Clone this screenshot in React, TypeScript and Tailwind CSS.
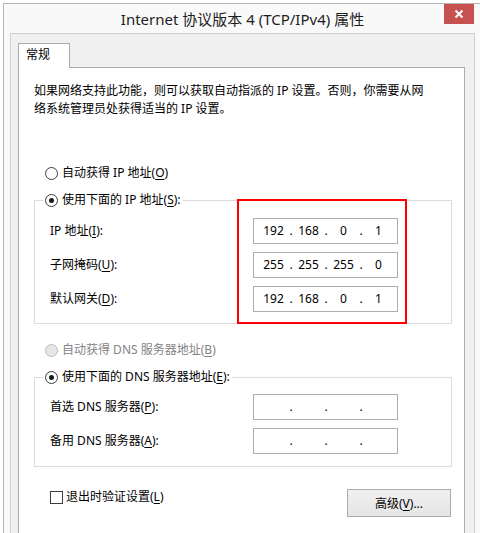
import React from "react";

const FONT = '"Noto Sans", "Noto Sans CJK SC", sans-serif';

function M({ children }: { children: React.ReactNode }) {
  return <span className="underline underline-offset-[2px]">{children}</span>;
}

function Radio({ checked, disabled }: { checked?: boolean; disabled?: boolean }) {
  return (
    <span
      className={
        disabled
          ? "w-[13px] h-[13px] rounded-full border border-[#bcbcbc] bg-[#e6e6e6] flex items-center justify-center shrink-0"
          : "w-[13px] h-[13px] rounded-full border border-[#3c3c3c] bg-white flex items-center justify-center shrink-0"
      }
    >
      {checked && <span className="w-[5px] h-[5px] rounded-full bg-[#1a1a1a]" />}
    </span>
  );
}

function IpBox({ parts }: { parts: string[] }) {
  return (
    <div className="w-[145px] h-[26px] border border-[#abadb3] bg-white flex items-center pl-[3px] text-[12px] leading-[18px] text-black">
      {parts.map((p, i) => (
        <React.Fragment key={i}>
          <div className="w-[33px] text-center">{p}</div>
          {i < 3 && <div className="w-[2px] flex justify-center">.</div>}
        </React.Fragment>
      ))}
    </div>
  );
}

function Row({ label, parts }: { label: React.ReactNode; parts: string[] }) {
  return (
    <div className="flex items-center">
      <div className="w-[218px] pl-[15px] leading-[18px]">{label}</div>
      <IpBox parts={parts} />
    </div>
  );
}

export default function App() {
  return (
    <div
      className="w-[480px] h-[533px] overflow-hidden bg-white pl-[3px] pt-[3px] text-[12px] text-black"
      style={{ fontFamily: FONT }}
    >
      <div className="w-[478px] h-[600px] border-l border-t border-[#b4b4b4] bg-[#f9f9f9]">
        {/* Title bar */}
        <div className="relative h-[29px] flex items-center justify-center">
          <span className="text-[15px] leading-[20px] text-[#1e1e1e]">
            Internet 协议版本 4 (TCP/IPv4) 属性
          </span>
          <div className="absolute top-0 right-[7px] w-[30px] h-[20px] bg-[#c75050] flex items-center justify-center">
            <svg width="10" height="10" viewBox="0 0 10 10">
              <path d="M1.5 1.5 L8.5 8.5 M8.5 1.5 L1.5 8.5" stroke="#fff" strokeWidth="2" />
            </svg>
          </div>
        </div>

        {/* Client area */}
        <div className="ml-[6px] w-[465px] h-[560px] border-l border-t border-r border-[#d0d0d0] bg-[#f0f0f0] pt-[9px]">
          {/* Tab header */}
          <div className="ml-[7px] w-[52px] h-[25px] border-t border-l border-r border-[#acacac] bg-white relative z-10 -mb-[1px] pl-[7px] pt-[2px] leading-[18px]">
            常规
          </div>
          {/* Tab page */}
          <div className="ml-[7px] w-[447px] h-[520px] border border-[#acacac] bg-white">
            <div className="pl-[15px] pt-[14px] leading-[18px]">
              如果网络支持此功能，则可以获取自动指派的 IP 设置。否则，你需要从网
              <br />
              络系统管理员处获得适当的 IP 设置。
            </div>

            <div className="mt-[46px] pl-[26px] h-[18px] flex items-center gap-[4px] leading-[18px]">
              <Radio />
              <span>
                自动获得 IP 地址(<M>O</M>)
              </span>
            </div>

            <div className="relative mt-[9px] ml-[15px] w-[418px]">
              <fieldset className="border border-[#dcdcdc] pb-[11px]">
                <legend className="ml-[9px] pl-[1px] pr-[2px]">
                  <span className="h-[18px] flex items-center gap-[4px] leading-[18px]">
                    <Radio checked />
                    <span>
                      使用下面的 IP 地址(<M>S</M>):
                    </span>
                  </span>
                </legend>
                <div className="mt-[9px] flex flex-col gap-[8px]">
                  <Row
                    label={
                      <>
                        IP 地址(<M>I</M>):
                      </>
                    }
                    parts={["192", "168", "0", "1"]}
                  />
                  <Row
                    label={
                      <>
                        子网掩码(<M>U</M>):
                      </>
                    }
                    parts={["255", "255", "255", "0"]}
                  />
                  <Row
                    label={
                      <>
                        默认网关(<M>D</M>):
                      </>
                    }
                    parts={["192", "168", "0", "1"]}
                  />
                </div>
              </fieldset>
              <div className="absolute left-[203px] top-[8px] w-[170px] h-[125px] border-2 border-[#ff0000] pointer-events-none" />
            </div>

            <div className="mt-[17px] pl-[26px] h-[18px] flex items-center gap-[4px] leading-[18px] text-[#838383]">
              <Radio disabled />
              <span>
                自动获得 DNS 服务器地址(<M>B</M>)
              </span>
            </div>

            <div className="mt-[9px] ml-[15px] w-[418px]">
              <fieldset className="border border-[#dcdcdc] pb-[12px]">
                <legend className="ml-[9px] pl-[1px] pr-[2px]">
                  <span className="h-[18px] flex items-center gap-[4px] leading-[18px]">
                    <Radio checked />
                    <span>
                      使用下面的 DNS 服务器地址(<M>E</M>):
                    </span>
                  </span>
                </legend>
                <div className="mt-[8px] flex flex-col gap-[8px]">
                  <Row
                    label={
                      <>
                        首选 DNS 服务器(<M>P</M>):
                      </>
                    }
                    parts={["", "", "", ""]}
                  />
                  <Row
                    label={
                      <>
                        备用 DNS 服务器(<M>A</M>):
                      </>
                    }
                    parts={["", "", "", ""]}
                  />
                </div>
              </fieldset>
            </div>

            <div className="mt-[21px] ml-[15px] w-[418px] flex justify-between items-start">
              <div className="pl-[16px] h-[18px] flex items-center gap-[3px] leading-[18px]">
                <span className="w-[13px] h-[13px] border border-[#3c3c3c] bg-white shrink-0" />
                <span>
                  退出时验证设置(<M>L</M>)
                </span>
              </div>
              <div className="mt-[1px] mr-[1px] w-[104px] h-[28px] border border-[#acacac] bg-gradient-to-b from-[#f0f0f0] to-[#e5e5e5] flex items-center justify-center leading-[18px] pt-[1px]">
                <span>
                  高级(<M>V</M>)...
                </span>
              </div>
            </div>
          </div>
        </div>
      </div>
    </div>
  );
}
